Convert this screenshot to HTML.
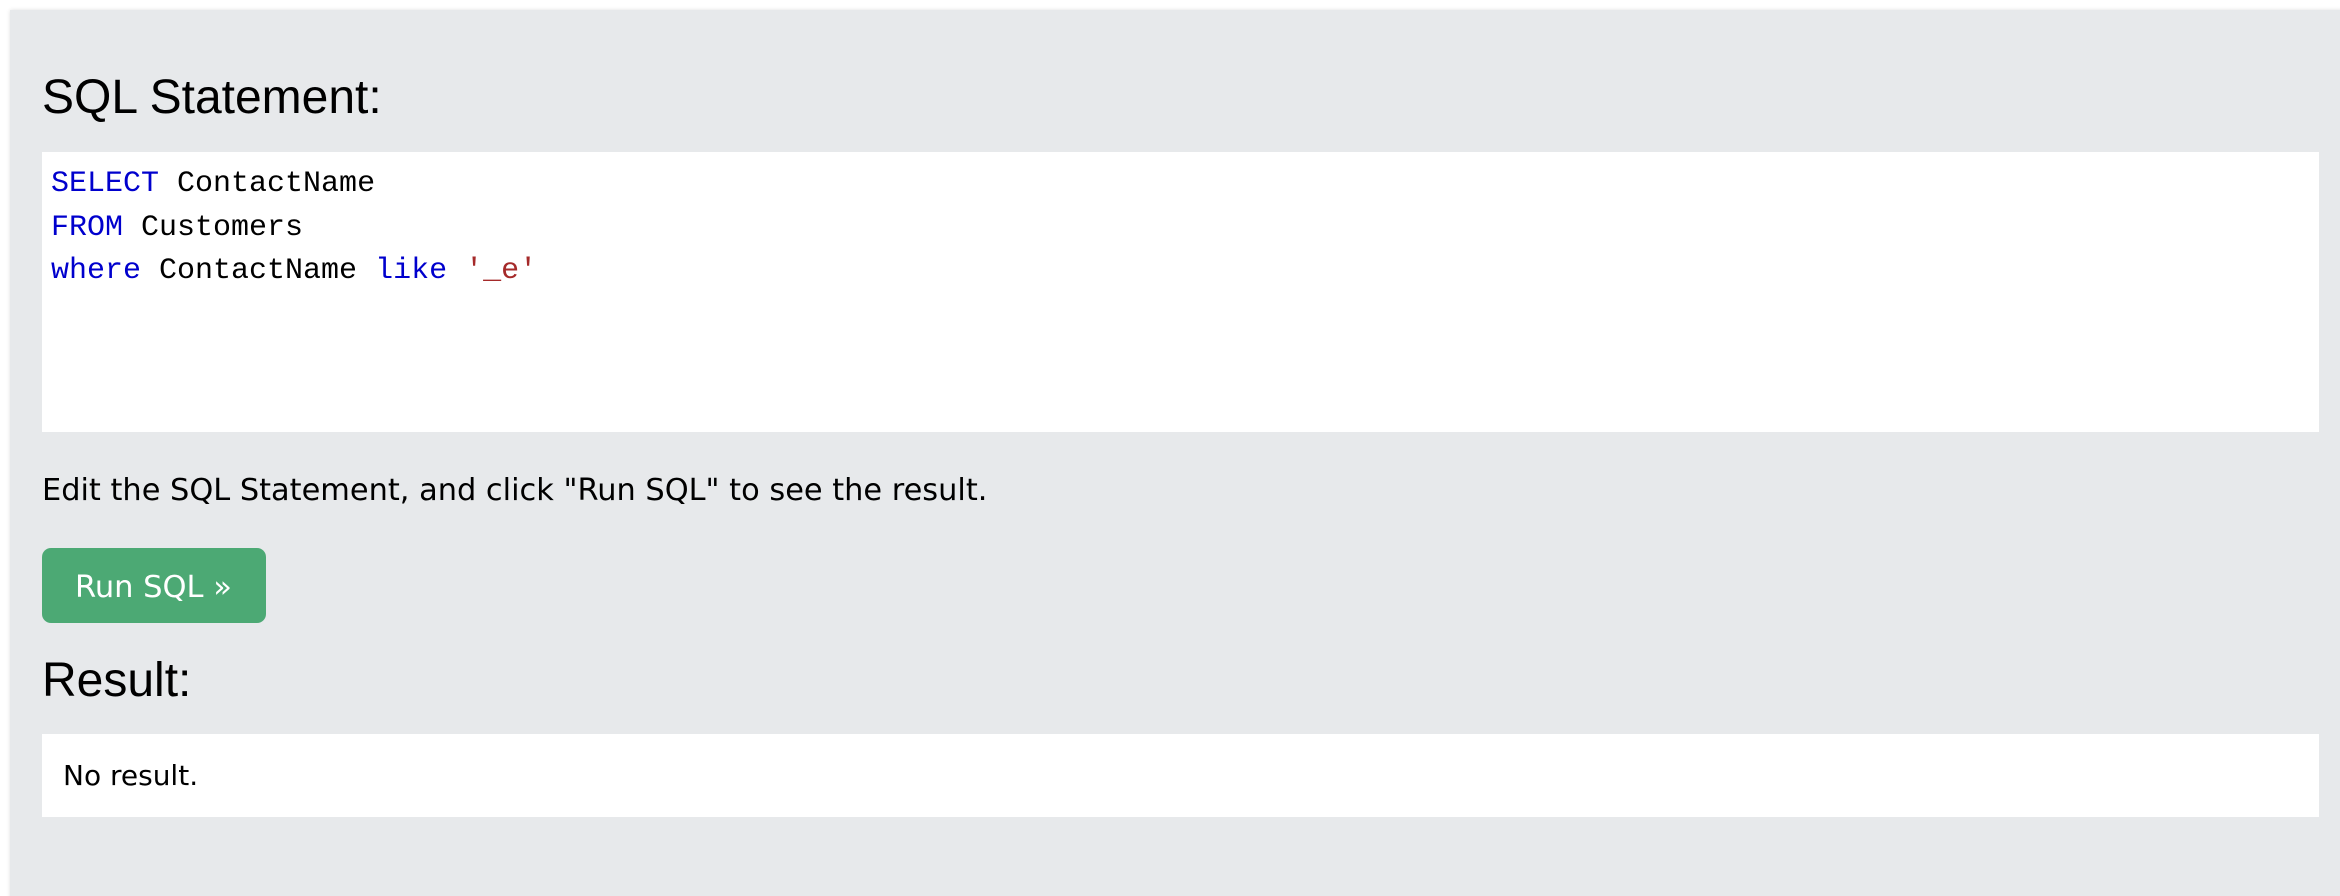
<!DOCTYPE html>
<html><head><meta charset="utf-8"><style>
html,body{margin:0;padding:0;width:2340px;height:896px;background:#fff;overflow:hidden;position:relative}
.panel{position:absolute;left:10px;top:10px;width:2340px;height:900px;background:#E7E9EB;box-shadow:0 0 4px rgba(0,0,0,0.12)}
.h{position:absolute;left:42px;font-family:"Liberation Sans",Arial,sans-serif;font-size:48px;line-height:48px;color:#000;white-space:nowrap}
.box{position:absolute;left:42px;width:2277px;background:#fff}
.code{position:absolute;left:51px;top:163px;font-family:"Liberation Mono",monospace;font-size:30px;line-height:43.5px;color:#000;white-space:pre}
.k{color:#0000CD}.s{color:#A52A2A}
.t{position:absolute;font-family:"DejaVu Sans",Verdana,sans-serif;color:#000;white-space:nowrap}
.btn{position:absolute;left:42px;top:548px;width:224px;height:75px;border-radius:9px;background:#4CA974}
</style></head><body>
<div class="panel"></div>
<div class="h" style="top:74px">SQL Statement:</div>
<div class="box" style="top:152px;height:280px"></div>
<div class="code"><span class="k">SELECT</span> ContactName
<span class="k">FROM</span> Customers
<span class="k">where</span> ContactName <span class="k">like</span> <span class="s">'_e'</span></div>
<div class="t" style="left:42px;top:476px;font-size:30.4px;line-height:30px">Edit the SQL Statement, and click "Run SQL" to see the result.</div>
<div class="btn"></div>
<div class="t" style="left:75px;top:573px;font-size:30.5px;line-height:30px;color:#fff">Run SQL »</div>
<div class="h" style="top:657px">Result:</div>
<div class="box" style="top:734px;height:83px"></div>
<div class="t" style="left:63px;top:762px;font-size:28px;line-height:28px">No result.</div>
</body></html>
